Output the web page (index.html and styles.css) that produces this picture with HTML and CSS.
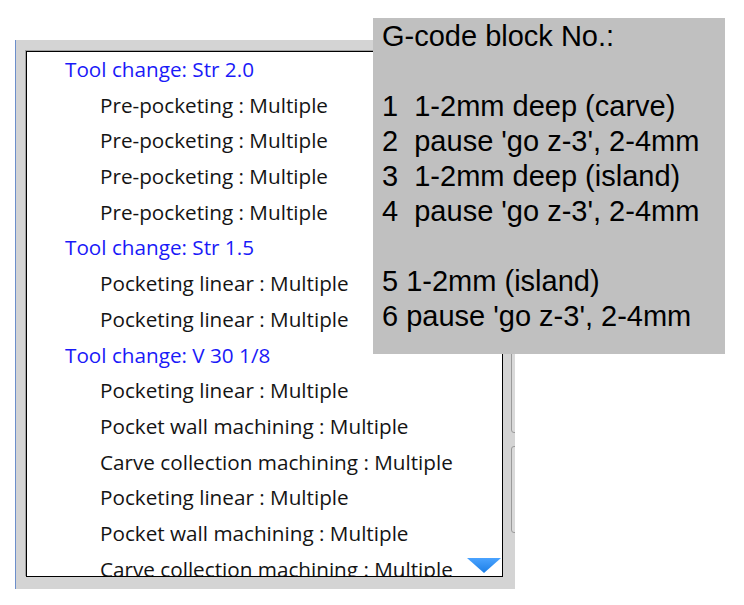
FILE: index.html
```html
<!DOCTYPE html>
<html lang="en">
<head>
    <meta charset="UTF-8">
    <meta name="viewport" content="width=device-width, initial-scale=1.0">
    <title>Toolpath list</title>
    <link rel="stylesheet" href="styles.css">
</head>
<body>
    <div class="scene">
        <div class="panel">
            <div class="ops">
                <ul class="ops-list">
                    <li class="tool">Tool change: Str 2.0</li>
                    <li class="op">Pre-pocketing : Multiple</li>
                    <li class="op">Pre-pocketing : Multiple</li>
                    <li class="op">Pre-pocketing : Multiple</li>
                    <li class="op">Pre-pocketing : Multiple</li>
                    <li class="tool">Tool change: Str 1.5</li>
                    <li class="op">Pocketing linear : Multiple</li>
                    <li class="op">Pocketing linear : Multiple</li>
                    <li class="tool">Tool change: V 30 1/8</li>
                    <li class="op">Pocketing linear : Multiple</li>
                    <li class="op">Pocket wall machining : Multiple</li>
                    <li class="op">Carve collection machining : Multiple</li>
                    <li class="op">Pocketing linear : Multiple</li>
                    <li class="op">Pocket wall machining : Multiple</li>
                    <li class="op">Carve collection machining : Multiple</li>
                </ul>
                <svg class="more" width="34" height="16" viewBox="0 0 34 16">
                    <defs>
                        <linearGradient id="moreFill" x1="0" y1="0" x2="0" y2="1">
                            <stop offset="0" stop-color="#4aa3ff"/>
                            <stop offset="1" stop-color="#1c7ee6"/>
                        </linearGradient>
                    </defs>
                    <polygon points="0,0 34,0 17,15" fill="url(#moreFill)"/>
                </svg>
            </div>
            <div class="side">
                <div class="side-btn tall"></div>
                <div class="side-btn short"></div>
            </div>
        </div>

        <div class="tip">G-code block No.:

1  1-2mm deep (carve)
2  pause 'go z-3', 2-4mm
3  1-2mm deep (island)
4  pause 'go z-3', 2-4mm

5 1-2mm (island)
6 pause 'go z-3', 2-4mm</div>
    </div>
</body>
</html>
```

FILE: styles.css
```css
* {
    margin: 0;
    padding: 0;
    box-sizing: border-box;
}

body {
    background-color: #ffffff;
    font-family: "Open Sans", "Noto Sans", sans-serif;
}

.scene {
    position: relative;
    width: 744px;
    height: 605px;
    padding: 40px 0 0 15px;
}

.panel {
    display: flex;
    width: 500px;
    height: 549px;
    padding: 11px 0 12px 10px;
    background-color: #d4d4d4;
    border-left: 1px solid #6d8fcb;
    overflow: hidden;
}

.ops {
    position: relative;
    flex: none;
    width: 477px;
    height: 526px;
    background-color: #ffffff;
    border: 1px solid #000000;
    box-shadow: -1px -1px 0 #a0a0a0;
    overflow: hidden;
}

.ops-list {
    list-style: none;
}

.ops-list li {
    height: 35.7px;
    line-height: 35px;
    font-size: 20.7px;
    white-space: nowrap;
}

.tool {
    padding-left: 38px;
    color: #1a1af8;
}

.op {
    padding-left: 73px;
    color: #141414;
}

.more {
    position: absolute;
    right: 1px;
    bottom: 2px;
}

.side {
    display: flex;
    flex-direction: column;
    gap: 13px;
    margin-left: 8px;
    padding-top: 250px;
}

.side-btn {
    width: 24px;
    border: 1px solid #9a9a9a;
    border-radius: 3px;
    background-color: #d9d9d9;
}

.side-btn.tall {
    height: 132px;
}

.side-btn.short {
    height: 87px;
}

.tip {
    position: absolute;
    left: 373px;
    top: 18px;
    width: 352px;
    height: 336px;
    padding: 1px 9px;
    background-color: #c0c0c0;
    color: #000000;
    font-family: "Liberation Sans", Arial, sans-serif;
    font-size: 29px;
    line-height: 35px;
    white-space: pre;
    overflow: hidden;
}
```
